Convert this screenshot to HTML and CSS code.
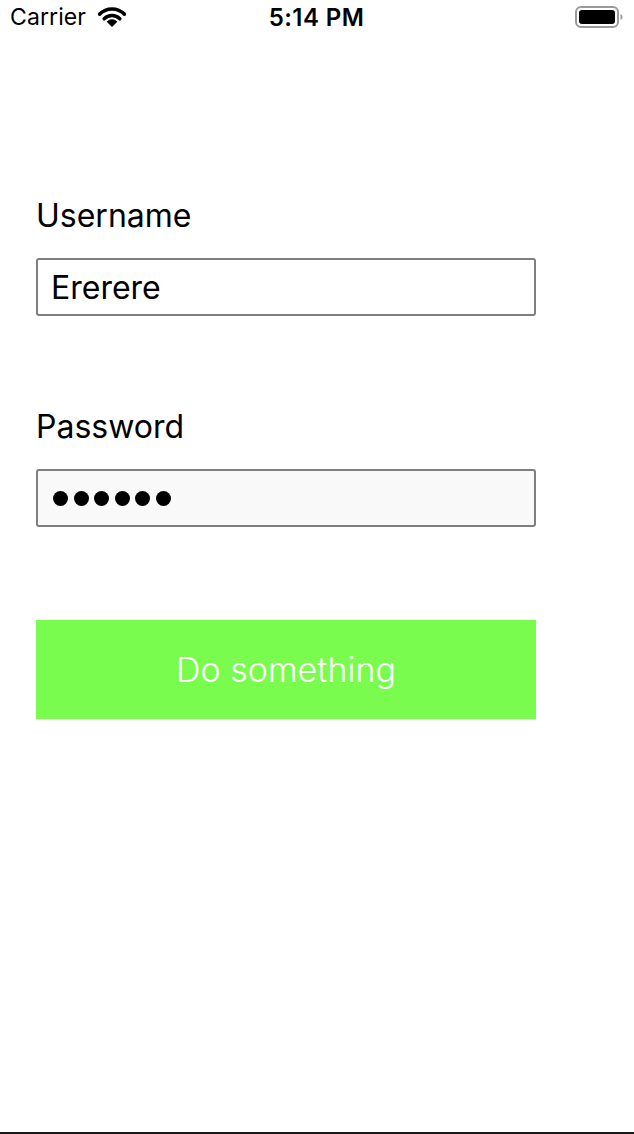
FILE: index.html
```html
<!DOCTYPE html>
<html lang="en">
<head>
<meta charset="utf-8">
<title>Login</title>
<link rel="stylesheet" href="styles.css">
</head>
<body>
<div class="screen">
  <header class="status-bar">
    <div class="status-left">
      <span class="carrier">Carrier</span>
      <svg class="wifi" width="30" height="21" viewBox="0 0 30 21" aria-hidden="true">
        <path d="M2.63 8.13 A17.5 17.5 0 0 1 27.37 8.13" fill="none" stroke="#000" stroke-width="3.6" stroke-linecap="round"/>
        <path d="M7.22 12.72 A11 11 0 0 1 22.78 12.72" fill="none" stroke="#000" stroke-width="3.6" stroke-linecap="round"/>
        <path d="M15 20.5 L10.2 15.7 A6.8 6.8 0 0 1 19.8 15.7 Z" fill="#000" stroke="#000" stroke-width="1" stroke-linejoin="round"/>
      </svg>
    </div>
    <div class="time">5:14 PM</div>
    <div class="status-right">
      <svg class="battery" width="48" height="24" viewBox="0 0 48 24" aria-hidden="true">
        <rect x="1" y="2" width="42" height="20" rx="5" fill="none" stroke="#9a9a9a" stroke-width="2"/>
        <rect x="4" y="5" width="36" height="14" rx="3" fill="#000"/>
        <path d="M45.5 9 Q47.5 9.5 47.5 12 Q47.5 14.5 45.5 15 Z" fill="#9a9a9a"/>
      </svg>
    </div>
  </header>

  <main class="form">
    <div class="field">
      <label class="label">Username</label>
      <div class="input">Ererere</div>
    </div>
    <div class="field">
      <label class="label">Password</label>
      <div class="input input-secure">
        <span class="dot"></span><span class="dot"></span><span class="dot"></span><span class="dot"></span><span class="dot"></span><span class="dot"></span>
      </div>
    </div>
    <button class="action">Do something</button>
  </main>

  <div class="bottom-line"></div>
</div>
</body>
</html>
```

FILE: styles.css
```css
html, body {
  margin: 0;
  padding: 0;
  background: #ffffff;
}

body {
  font-family: Inter, "Noto Sans", "Liberation Sans", sans-serif;
  color: #000;
}

.screen {
  display: flex;
  flex-direction: column;
  min-height: 100vh;
  box-sizing: border-box;
}

.status-bar {
  display: flex;
  align-items: center;
  justify-content: space-between;
  height: 34px;
  padding: 0 11px 0 10px;
}

.status-left {
  display: flex;
  align-items: center;
  gap: 11px;
  width: 180px;
}

.carrier {
  font-size: 23px;
  font-weight: 400;
  letter-spacing: 0.1px;
}

.wifi {
  display: block;
  margin-top: -1px;
}

.time {
  font-size: 24px;
  font-weight: 600;
  letter-spacing: 0.4px;
  margin-left: 0;
}

.status-right {
  width: 180px;
  display: flex;
  justify-content: flex-end;
}

.battery {
  display: block;
  margin-top: -1px;
}

.form {
  display: flex;
  flex-direction: column;
  padding: 164px 0 0 36px;
  width: 500px;
}

.field {
  display: flex;
  flex-direction: column;
  gap: 24px;
  margin-bottom: 93px;
}

.label {
  font-size: 32px;
  line-height: 36px;
  height: 36px;
  font-weight: 400;
}

.input {
  box-sizing: border-box;
  height: 58px;
  border: 2px solid #7f7f7f;
  border-radius: 3px;
  background: #ffffff;
  padding: 0 13px;
  display: flex;
  align-items: center;
  font-size: 32px;
  font-weight: 400;
}

.input-secure {
  background: #f9f9f9;
  padding-left: 15px;
  gap: 5.5px;
}

.dot {
  width: 15px;
  height: 15px;
  border-radius: 50%;
  background: #000;
}

.action {
  box-sizing: border-box;
  height: 99px;
  border: none;
  background: #7afc4e;
  color: #ffffff;
  font-family: Inter, "Noto Sans", "Liberation Sans", sans-serif;
  font-size: 34px;
  font-weight: 300;
  padding: 0;
  cursor: pointer;
}

.bottom-line {
  margin-top: auto;
  height: 2px;
  background: #1a1a1a;
}
```
